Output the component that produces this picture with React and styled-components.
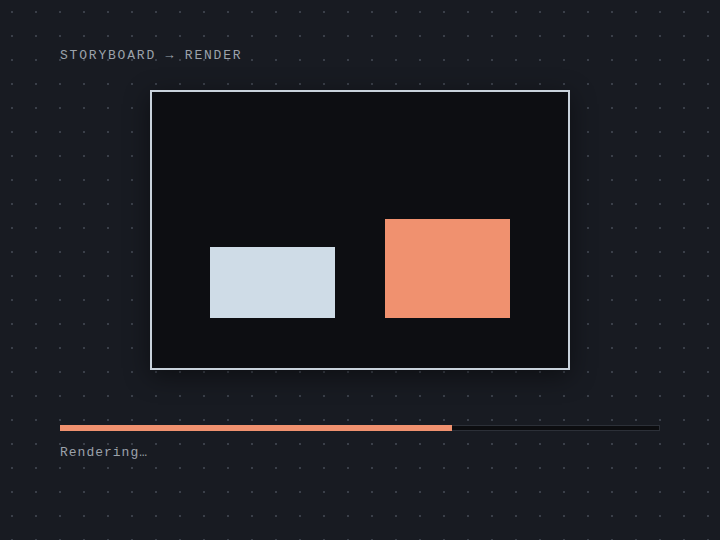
import React from 'react'
import styled, { createGlobalStyle } from 'styled-components'

const GlobalStyle = createGlobalStyle`
  html, body {
    margin: 0;
    padding: 0;
    background: #181b22;
  }
  body {
    font-family: "Liberation Mono", "DejaVu Sans Mono", monospace;
  }
`

const Page = styled.div`
  width: 720px;
  height: 540px;
  box-sizing: border-box;
  padding: 48px 60px 0;
  background-color: #181b22;
  background-image: radial-gradient(circle, #3a3f49 0.9px, transparent 1.5px);
  background-size: 24px 24px;
  background-position: 0 0;
  display: flex;
  flex-direction: column;
`

const Heading = styled.div`
  font-size: 13px;
  letter-spacing: 1.8px;
  color: #9ca2ab;
  line-height: 16px;
`

const Stage = styled.div`
  align-self: center;
  margin-top: 26px;
  width: 420px;
  height: 280px;
  box-sizing: border-box;
  border: 2px solid #c9d2dc;
  background: #0d0e12;
  box-shadow: 0 6px 24px rgba(0, 0, 0, 0.45);
  display: flex;
  align-items: flex-end;
  justify-content: space-between;
  padding: 0 58px 50px;
`

const Shot = styled.div`
  width: 125px;
  height: ${p => p.tall ? 99 : 71}px;
  background: ${p => p.color};
`

const Track = styled.div`
  margin-top: 55px;
  height: 6px;
  box-sizing: border-box;
  border: 1px solid #2c3038;
  background: #0c0d10;
  display: flex;
`

const Fill = styled.div`
  background: #f0916f;
  margin: -1px 0 -1px -1px;
`

const Status = styled.div`
  margin-top: 14px;
  font-size: 13px;
  letter-spacing: 1px;
  color: #9ca2ab;
  line-height: 16px;
`

export default function App() {
  const progress = 0.655
  return (
    <>
      <GlobalStyle />
      <Page>
        <Heading>STORYBOARD → RENDER</Heading>
        <Stage>
          <Shot color="#cfdce7" />
          <Shot color="#f0916f" tall />
        </Stage>
        <Track>
          <Fill style={{ width: `${progress * 100}%` }} />
        </Track>
        <Status>Rendering…</Status>
      </Page>
    </>
  )
}
